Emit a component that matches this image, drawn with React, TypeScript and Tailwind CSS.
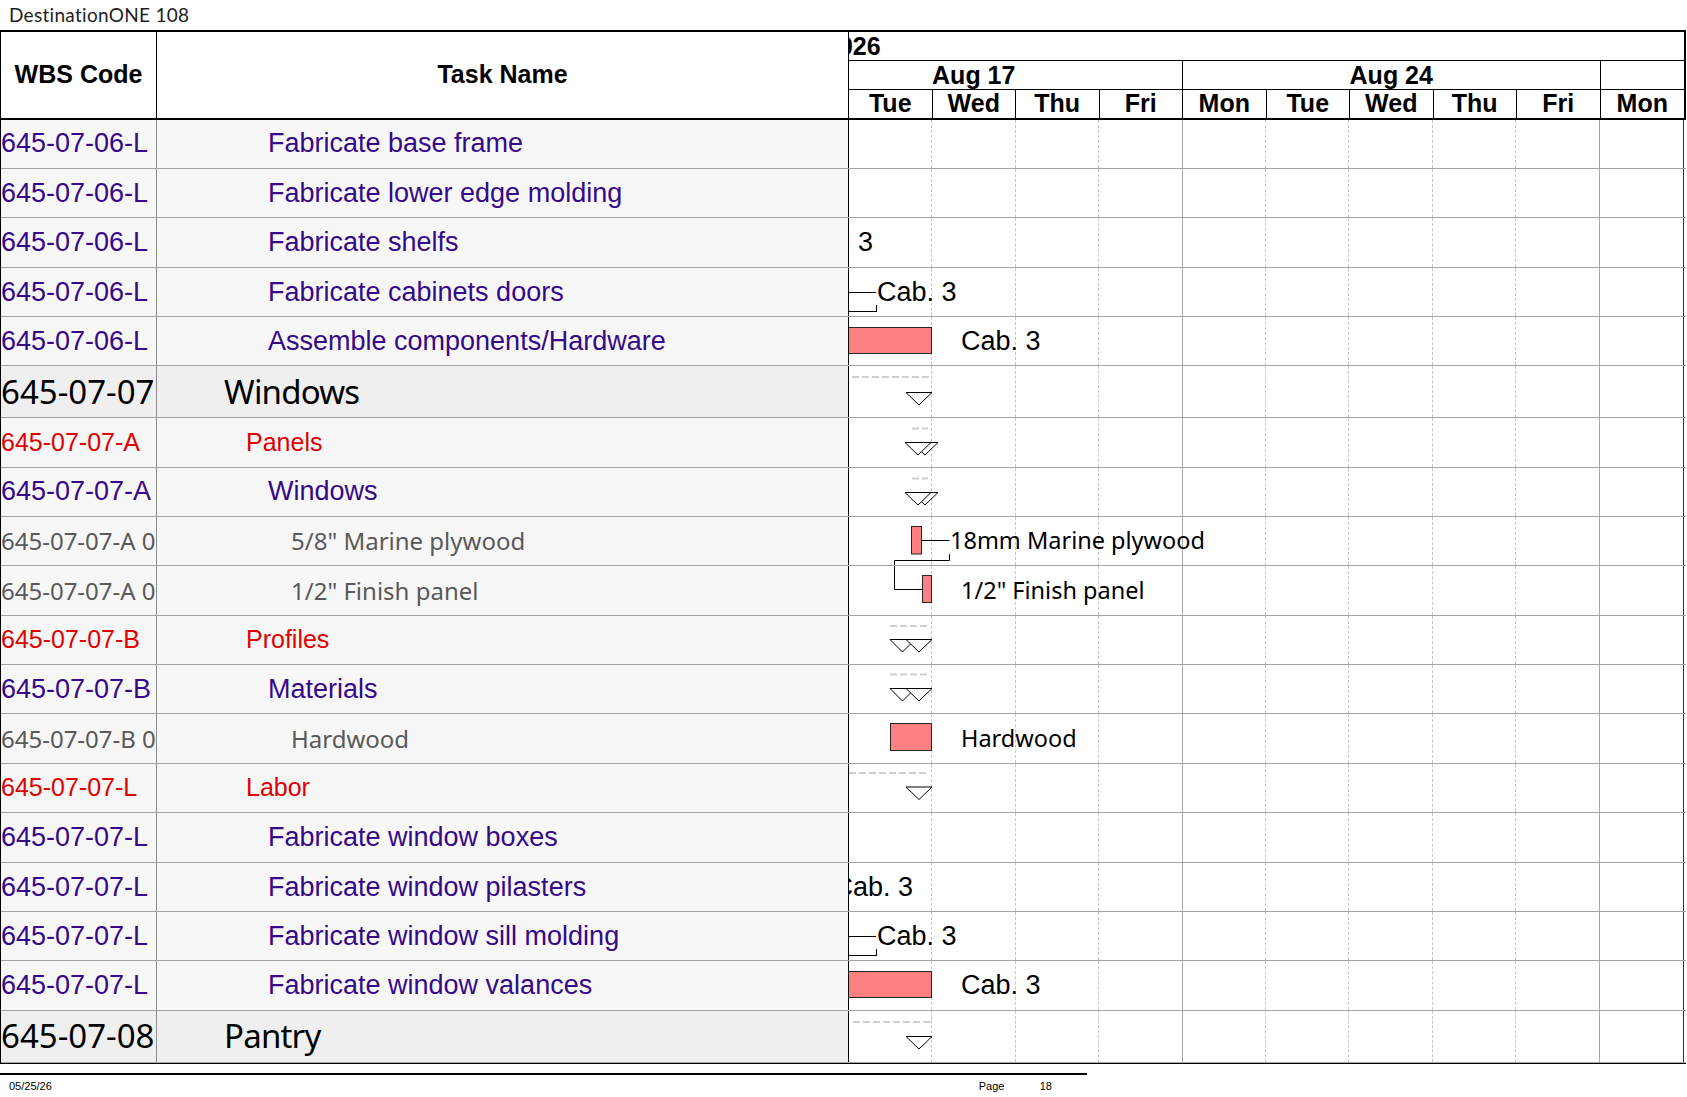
import React from 'react';

type RowKind = 'summary' | 'group' | 'task' | 'item';

interface GanttRow {
  code: string;
  name: string;
  kind: RowKind;
  shapes?: React.ReactNode;
  labels?: { x: number; text: string; font: 'arial' | 'noto' }[];
}

const DAYS = ['Tue', 'Wed', 'Thu', 'Fri', 'Mon', 'Tue', 'Wed', 'Thu', 'Fri', 'Mon'];

const ROW_H = 'h-[49.4px]';
const SUMMARY_H = 'h-[51.7px]';

const kindStyles: Record<RowKind, { code: string; name: string; bg: string }> = {
  summary: {
    code: "font-['Noto_Sans',sans-serif] text-[33px] text-black",
    name: "font-['Noto_Sans',sans-serif] text-[33px] tracking-[-0.8px] text-black pl-[67px]",
    bg: 'bg-[#efefef]',
  },
  group: {
    code: "font-['Liberation_Sans',Arial,sans-serif] text-[25px] text-[#e00000]",
    name: "font-['Liberation_Sans',Arial,sans-serif] text-[25px] text-[#e00000] pl-[89px]",
    bg: 'bg-[#f7f7f7]',
  },
  task: {
    code: "font-['Liberation_Sans',Arial,sans-serif] text-[27px] text-[#36088a]",
    name: "font-['Liberation_Sans',Arial,sans-serif] text-[27px] text-[#36088a] pl-[111px]",
    bg: 'bg-[#f7f7f7]',
  },
  item: {
    code: "font-['Noto_Sans',sans-serif] text-[24px] text-[#595959]",
    name: "font-['Noto_Sans',sans-serif] text-[24px] text-[#595959] pl-[134px]",
    bg: 'bg-[#f7f7f7]',
  },
};

// chart drawing helpers (coordinates relative to the row's timeline cell)
const Bar = ({ x, y, w, h }: { x: number; y: number; w: number; h: number }) => (
  <rect x={x} y={y} width={w} height={h} fill="#ff8080" stroke="#262626" strokeWidth={1} />
);

const Seg = ({ x1, y1, x2, y2 }: { x1: number; y1: number; x2: number; y2: number }) => (
  <line x1={x1} y1={y1} x2={x2} y2={y2} stroke="#000" strokeWidth={1} />
);

const Dash = ({ x1, x2, y }: { x1: number; x2: number; y: number }) => (
  <line x1={x1} y1={y} x2={x2} y2={y} stroke="#cfcfcf" strokeWidth={2} strokeDasharray="7 3" />
);

const Tri = ({ x, y, w = 26, h = 12.5 }: { x: number; y: number; w?: number; h?: number }) => (
  <polygon
    points={`${x},${y} ${x + w},${y} ${x + w / 2},${y + h}`}
    fill="#fff"
    stroke="#000"
    strokeWidth={1}
  />
);

const linkShapes = (
  <>
    <Seg x1={0} y1={24.5} x2={27} y2={24.5} />
    <Seg x1={0} y1={43.5} x2={27.5} y2={43.5} />
    <Seg x1={27.5} y1={37} x2={27.5} y2={44} />
  </>
);

const rows: GanttRow[] = [
  { code: '645-07-06-L', name: 'Fabricate base frame', kind: 'task' },
  { code: '645-07-06-L', name: 'Fabricate lower edge molding', kind: 'task' },
  {
    code: '645-07-06-L',
    name: 'Fabricate shelfs',
    kind: 'task',
    labels: [{ x: -55.5, text: 'Cab. 3', font: 'arial' }],
  },
  {
    code: '645-07-06-L',
    name: 'Fabricate cabinets doors',
    kind: 'task',
    shapes: linkShapes,
    labels: [{ x: 28, text: 'Cab. 3', font: 'arial' }],
  },
  {
    code: '645-07-06-L',
    name: 'Assemble components/Hardware',
    kind: 'task',
    shapes: <Bar x={-5.5} y={10.5} w={88} h={26} />,
    labels: [{ x: 112, text: 'Cab. 3', font: 'arial' }],
  },
  {
    code: '645-07-07',
    name: 'Windows',
    kind: 'summary',
    shapes: (
      <>
        <Dash x1={3} x2={83} y={11} />
        <Tri x={57} y={26.5} />
      </>
    ),
  },
  {
    code: '645-07-07-A',
    name: 'Panels',
    kind: 'group',
    shapes: (
      <>
        <Dash x1={63} x2={79} y={10.5} />
        <Tri x={63} y={24.5} />
        <Tri x={56} y={24.5} />
      </>
    ),
  },
  {
    code: '645-07-07-A',
    name: 'Windows',
    kind: 'task',
    shapes: (
      <>
        <Dash x1={63} x2={79} y={10.5} />
        <Tri x={63} y={24.5} />
        <Tri x={56} y={24.5} />
      </>
    ),
  },
  {
    code: '645-07-07-A 01',
    name: '5/8" Marine plywood',
    kind: 'item',
    shapes: (
      <>
        <Bar x={62.5} y={9.5} w={10} h={27.5} />
        <Seg x1={73} y1={23.5} x2={100.5} y2={23.5} />
        <Seg x1={100.5} y1={37} x2={100.5} y2={43.5} />
        <Seg x1={45.5} y1={43.5} x2={100.5} y2={43.5} />
        <Seg x1={45.5} y1={43.5} x2={45.5} y2={52} />
      </>
    ),
    labels: [{ x: 101, text: '18mm Marine plywood', font: 'noto' }],
  },
  {
    code: '645-07-07-A 02',
    name: '1/2" Finish panel',
    kind: 'item',
    shapes: (
      <>
        <Seg x1={45.5} y1={-2} x2={45.5} y2={23.5} />
        <Seg x1={45.5} y1={23.5} x2={73} y2={23.5} />
        <Bar x={73.5} y={9.5} w={9} h={27} />
      </>
    ),
    labels: [{ x: 112, text: '1/2" Finish panel', font: 'noto' }],
  },
  {
    code: '645-07-07-B',
    name: 'Profiles',
    kind: 'group',
    shapes: (
      <>
        <Dash x1={41} x2={79} y={10} />
        <Tri x={41} y={23.5} w={25} />
        <Tri x={57} y={23.5} />
      </>
    ),
  },
  {
    code: '645-07-07-B',
    name: 'Materials',
    kind: 'task',
    shapes: (
      <>
        <Dash x1={41} x2={79} y={9.5} />
        <Tri x={41} y={23.5} w={25} />
        <Tri x={57} y={23.5} />
      </>
    ),
  },
  {
    code: '645-07-07-B 01',
    name: 'Hardwood',
    kind: 'item',
    shapes: <Bar x={41.5} y={9.5} w={41} h={27} />,
    labels: [{ x: 112, text: 'Hardwood', font: 'noto' }],
  },
  {
    code: '645-07-07-L',
    name: 'Labor',
    kind: 'group',
    shapes: (
      <>
        <Dash x1={0} x2={79} y={9} />
        <Tri x={57} y={23} />
      </>
    ),
  },
  { code: '645-07-07-L', name: 'Fabricate window boxes', kind: 'task' },
  {
    code: '645-07-07-L',
    name: 'Fabricate window pilasters',
    kind: 'task',
    labels: [{ x: -15.5, text: 'Cab. 3', font: 'arial' }],
  },
  {
    code: '645-07-07-L',
    name: 'Fabricate window sill molding',
    kind: 'task',
    shapes: linkShapes,
    labels: [{ x: 28, text: 'Cab. 3', font: 'arial' }],
  },
  {
    code: '645-07-07-L',
    name: 'Fabricate window valances',
    kind: 'task',
    shapes: <Bar x={-5.5} y={10.5} w={88} h={26} />,
    labels: [{ x: 112, text: 'Cab. 3', font: 'arial' }],
  },
  {
    code: '645-07-08',
    name: 'Pantry',
    kind: 'summary',
    shapes: (
      <>
        <Dash x1={4} x2={83} y={11} />
        <Tri x={57} y={25.5} />
      </>
    ),
  },
];

function GridLines() {
  return (
    <div className="grid grid-cols-10 h-full">
      {DAYS.map((d, i) => (
        <div
          key={i}
          className={
            i === 9
              ? ''
              : i === 3 || i === 8
                ? 'border-r border-[#a6a6a6]'
                : 'border-r border-dashed border-[#c6c6c6]'
          }
        />
      ))}
    </div>
  );
}

function TimelineCell({ row }: { row: GanttRow }) {
  return (
    <div className="relative w-[835px] h-full overflow-hidden border-r border-r-[#25258f]">
      <GridLines />
      {row.shapes && (
        <svg className="absolute inset-0 overflow-visible" width={835} height="100%">
          {row.shapes}
        </svg>
      )}
      {row.labels?.map((l, i) => (
        <div
          key={i}
          className={
            'absolute top-0 h-full flex items-center whitespace-nowrap text-black ' +
            (l.font === 'arial'
              ? "font-['Liberation_Sans',Arial,sans-serif] text-[27px]"
              : "font-['Noto_Sans',sans-serif] text-[23.5px]")
          }
          style={{ left: l.x }}
        >
          {l.text}
        </div>
      ))}
    </div>
  );
}

function TableRow({ row }: { row: GanttRow }) {
  const s = kindStyles[row.kind];
  return (
    <div
      className={`flex border-b border-[#a3a3a3] ${row.kind === 'summary' ? SUMMARY_H : ROW_H}`}
    >
      <div
        className={`w-[156px] shrink-0 border-r border-[#8c8c8c] ${s.bg} flex items-center overflow-hidden whitespace-nowrap`}
      >
        <span className={s.code}>{row.code}</span>
      </div>
      <div
        className={`w-[692px] shrink-0 border-r border-black ${s.bg} flex items-center overflow-hidden whitespace-nowrap`}
      >
        <span className={s.name}>{row.name}</span>
      </div>
      <TimelineCell row={row} />
    </div>
  );
}

function Header() {
  const bold = "font-['Liberation_Sans',Arial,sans-serif] font-bold text-[25px] text-black";
  return (
    <div className={`flex h-[87.5px] border-b-2 border-black ${bold}`}>
      <div className="w-[156px] shrink-0 border-r border-black flex items-center justify-center">
        WBS Code
      </div>
      <div className="w-[692px] shrink-0 border-r border-black flex items-center justify-center">
        Task Name
      </div>
      <div className="w-[837px] shrink-0 border-r-2 border-black flex flex-col">
        <div className="h-[29px] border-b border-black flex items-center overflow-hidden">
          <span className="ml-[-24px] leading-none">2026</span>
        </div>
        <div className="h-[29px] border-b border-black flex overflow-hidden">
          <div className="ml-[-83.5px] w-[417.5px] shrink-0 border-r border-black flex items-center justify-center leading-none">
            Aug 17
          </div>
          <div className="w-[417.5px] shrink-0 border-r border-black flex items-center justify-center leading-none">
            Aug 24
          </div>
          <div className="flex-1" />
        </div>
        <div className="flex-1 grid grid-cols-10">
          {DAYS.map((d, i) => (
            <div
              key={i}
              className={`flex items-center justify-center leading-none ${i === 9 ? '' : 'border-r border-black'}`}
            >
              {d}
            </div>
          ))}
        </div>
      </div>
    </div>
  );
}

export default function App() {
  return (
    <div className="w-[1687px] h-[1097px] bg-white overflow-hidden">
      <div className="h-[30px] pl-[9px] flex items-center font-['Lato',sans-serif] text-[19px] text-[#1e1e1e] tracking-[0.3px]">
        DestinationONE 108
      </div>
      <div className="w-[1686px] border-t-2 border-l border-b border-black">
        <Header />
        {rows.map((row, i) => (
          <TableRow key={i} row={row} />
        ))}
      </div>
      <div className="w-[1087px] mt-[9px] border-t-2 border-black">
        <div className="h-[24px] flex items-center font-['Liberation_Sans',Arial,sans-serif] text-[11px] text-black">
          <span className="ml-[9px]">05/25/26</span>
          <span className="ml-auto w-[61px]">Page</span>
          <span className="mr-[35px]">18</span>
        </div>
      </div>
    </div>
  );
}
